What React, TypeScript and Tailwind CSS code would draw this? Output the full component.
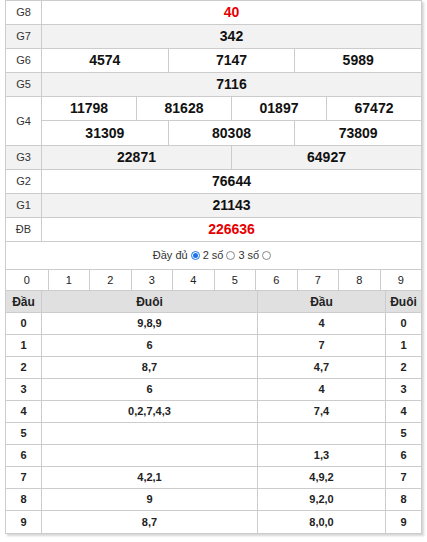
const prizes: { label: string; values: string[][]; gray: boolean; red?: boolean }[] = [
  { label: 'G8', values: [['40']], gray: false, red: true },
  { label: 'G7', values: [['342']], gray: true },
  { label: 'G6', values: [['4574', '7147', '5989']], gray: false },
  { label: 'G5', values: [['7116']], gray: true },
  { label: 'G4', values: [['11798', '81628', '01897', '67472'], ['31309', '80308', '73809']], gray: false },
  { label: 'G3', values: [['22871', '64927']], gray: true },
  { label: 'G2', values: [['76644']], gray: false },
  { label: 'G1', values: [['21143']], gray: true },
  { label: 'ĐB', values: [['226636']], gray: false, red: true },
];

const loto: { dau: string; duoi: string }[] = [
  { dau: '9,8,9', duoi: '4' },
  { dau: '6', duoi: '7' },
  { dau: '8,7', duoi: '4,7' },
  { dau: '6', duoi: '4' },
  { dau: '0,2,7,4,3', duoi: '7,4' },
  { dau: '', duoi: '' },
  { dau: '', duoi: '1,3' },
  { dau: '4,2,1', duoi: '4,9,2' },
  { dau: '9', duoi: '9,2,0' },
  { dau: '8,7', duoi: '8,0,0' },
];

function Radio({ checked }: { checked?: boolean }) {
  return checked ? (
    <span className="inline-flex w-[9px] h-[9px] rounded-full border border-[#1a73e8] items-center justify-center mx-[3px]">
      <span className="w-[5px] h-[5px] rounded-full bg-[#1a73e8]" />
    </span>
  ) : (
    <span className="inline-block w-[9px] h-[9px] rounded-full border border-[#888] mx-[3px]" />
  );
}

export default function App() {
  return (
    <div className="min-h-[542px] bg-white font-['Liberation_Sans',Arial,sans-serif] text-[#111]">
      <div className="ml-[5px] w-[417px] border border-[#ccc] shadow-[2px_2px_2px_#d6d6d6]">
        {/* Results */}
        <div>
          {prizes.map((p) => (
            <div
              key={p.label}
              className={`flex border-b border-[#ccc] ${p.gray ? 'bg-[#f2f2f2]' : 'bg-white'}`}
            >
              <div className="w-[36px] shrink-0 border-r border-[#ccc] flex items-center justify-center text-[11px] text-[#333]">
                {p.label}
              </div>
              <div className="flex-1 flex flex-col">
                {p.values.map((row, ri) => (
                  <div key={ri} className={`flex ${ri > 0 ? 'h-[25px] border-t border-[#ccc]' : 'h-[23px]'}`}>
                    {row.map((v, vi) => (
                      <div
                        key={vi}
                        className={`flex-1 flex items-center justify-center text-[14px] font-bold ${
                          vi > 0 ? 'border-l border-[#ccc]' : ''
                        } ${p.red ? 'text-[#e60000]' : 'text-[#111]'}`}
                      >
                        {v}
                      </div>
                    ))}
                  </div>
                ))}
              </div>
            </div>
          ))}
        </div>

        {/* Options */}
        <div className="h-[27px] flex items-center justify-center text-[11px] text-[#333]">
          <span>Đầy đủ</span>
          <Radio checked />
          <span>2 số</span>
          <Radio />
          <span>3 số</span>
          <Radio />
        </div>

        {/* Loto */}
        <div className="border-t border-[#ccc]">
          <div className="grid grid-cols-10 h-[21px] border-b border-[#ccc]">
            {Array.from({ length: 10 }, (_, i) => (
              <div
                key={i}
                className={`flex items-center justify-center text-[11px] text-[#222] ${i > 0 ? 'border-l border-[#ccc]' : ''}`}
              >
                {i}
              </div>
            ))}
          </div>
          <div className="flex h-[22px] bg-[#e0e0e0] border-b border-[#ccc] text-[12px] font-bold text-[#222]">
            <div className="w-[36px] flex items-center justify-center border-r border-[#ccc]">Đầu</div>
            <div className="w-[216px] flex items-center justify-center border-r border-[#ccc]">Đuôi</div>
            <div className="w-[128px] flex items-center justify-center border-r border-[#ccc]">Đầu</div>
            <div className="flex-1 flex items-center justify-center">Đuôi</div>
          </div>
          {loto.map((r, i) => (
            <div
              key={i}
              className={`flex h-[22px] text-[11px] font-bold text-[#222] ${i < 9 ? 'border-b border-[#ccc]' : ''}`}
            >
              <div className="w-[36px] flex items-center justify-center border-r border-[#ccc]">{i}</div>
              <div className="w-[216px] flex items-center justify-center border-r border-[#ccc]">{r.dau}</div>
              <div className="w-[128px] flex items-center justify-center border-r border-[#ccc]">{r.duoi}</div>
              <div className="flex-1 flex items-center justify-center">{i}</div>
            </div>
          ))}
        </div>
      </div>
    </div>
  );
}
